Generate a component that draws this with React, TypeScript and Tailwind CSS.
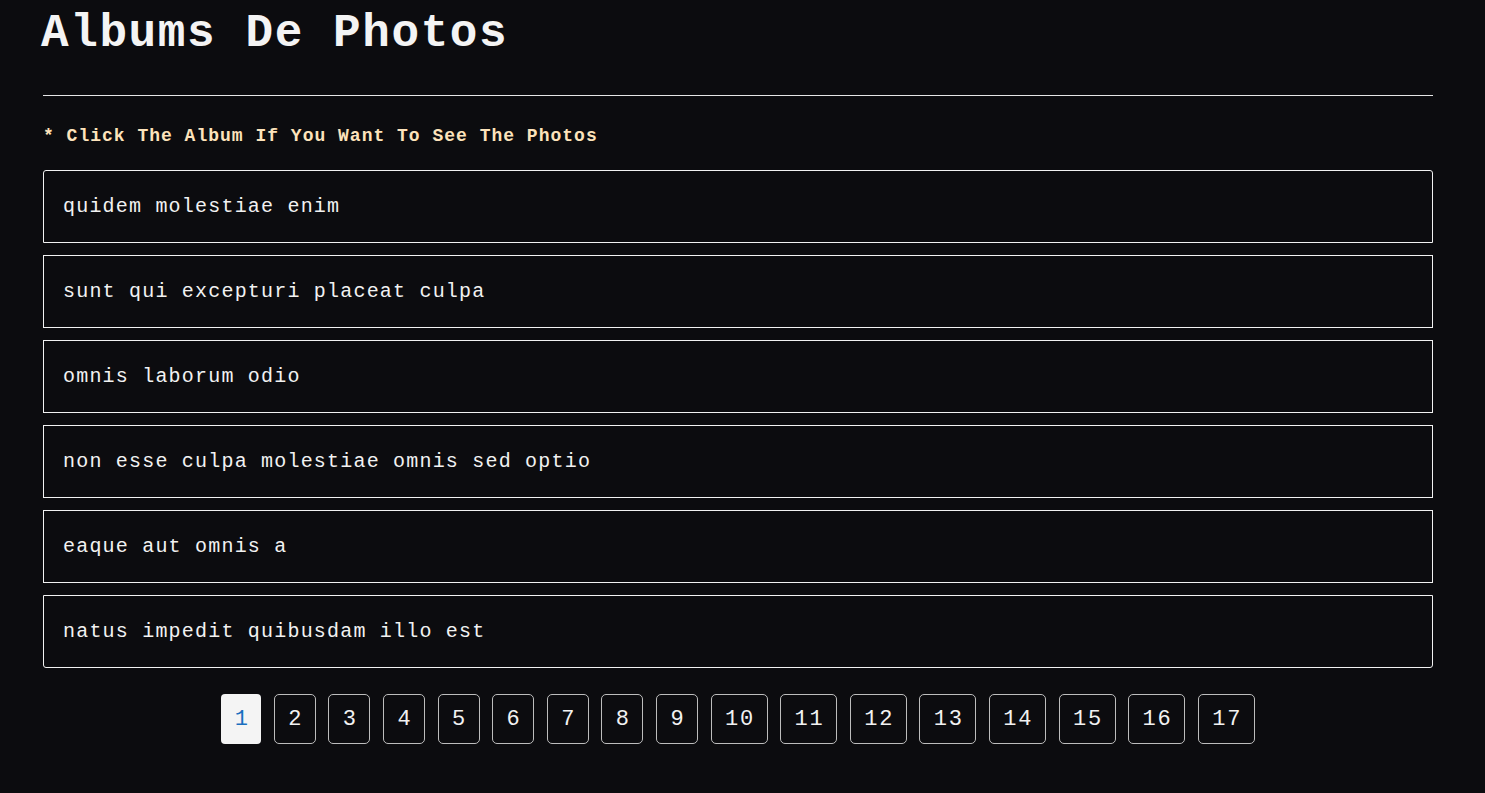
const albums = [
  'quidem molestiae enim',
  'sunt qui excepturi placeat culpa',
  'omnis laborum odio',
  'non esse culpa molestiae omnis sed optio',
  'eaque aut omnis a',
  'natus impedit quibusdam illo est',
];

const pages = Array.from({ length: 17 }, (_, i) => i + 1);

export default function App() {
  return (
    <div className="min-h-screen bg-[#0c0c0f] font-['Liberation_Mono','Courier_New',monospace]">
      <div className="w-[1390px] ml-[43px] pt-[11px]">
        {/* Header */}
        <h1 className="text-[46px] leading-[46px] font-bold tracking-[1.6px] text-[#f4f4f4] -ml-[2px]">
          Albums De Photos
        </h1>
        <hr className="mt-[38px] border-0 h-px bg-[#e6e6e6]" />

        <p className="mt-[31px] text-[18px] leading-[18px] font-bold tracking-[1px] text-[#fde3bb]">
          * Click The Album If You Want To See The Photos
        </p>

        {/* Album list */}
        <ul className="mt-[25px] flex flex-col gap-[12px]">
          {albums.map((title, i) => (
            <li
              key={title}
              className={`h-[73px] border border-[#f2f2f2] flex items-center pl-[19px] text-[20px] tracking-[1.2px] text-[#f2f2f2] cursor-pointer ${
                i === 0 ? 'rounded-t-[3px]' : ''
              } ${i === albums.length - 1 ? 'rounded-b-[3px]' : ''}`}
            >
              {title}
            </li>
          ))}
        </ul>

        {/* Pagination */}
        <div className="mt-[26px] flex justify-center gap-[12.6px] text-[22px] tracking-[1.8px]">
          {pages.map(p =>
            p === 1 ? (
              <button
                key={p}
                className="h-[50px] pl-[13.4px] pr-[11.6px] rounded-[4px] bg-[#f4f4f4] text-[#1a6fbf]"
              >
                {p}
              </button>
            ) : (
              <button
                key={p}
                className="h-[50px] pl-[13.4px] pr-[11.6px] rounded-[5px] border border-[#bdbdbd] text-[#f2f2f2]"
              >
                {p}
              </button>
            )
          )}
        </div>
      </div>
    </div>
  );
}
